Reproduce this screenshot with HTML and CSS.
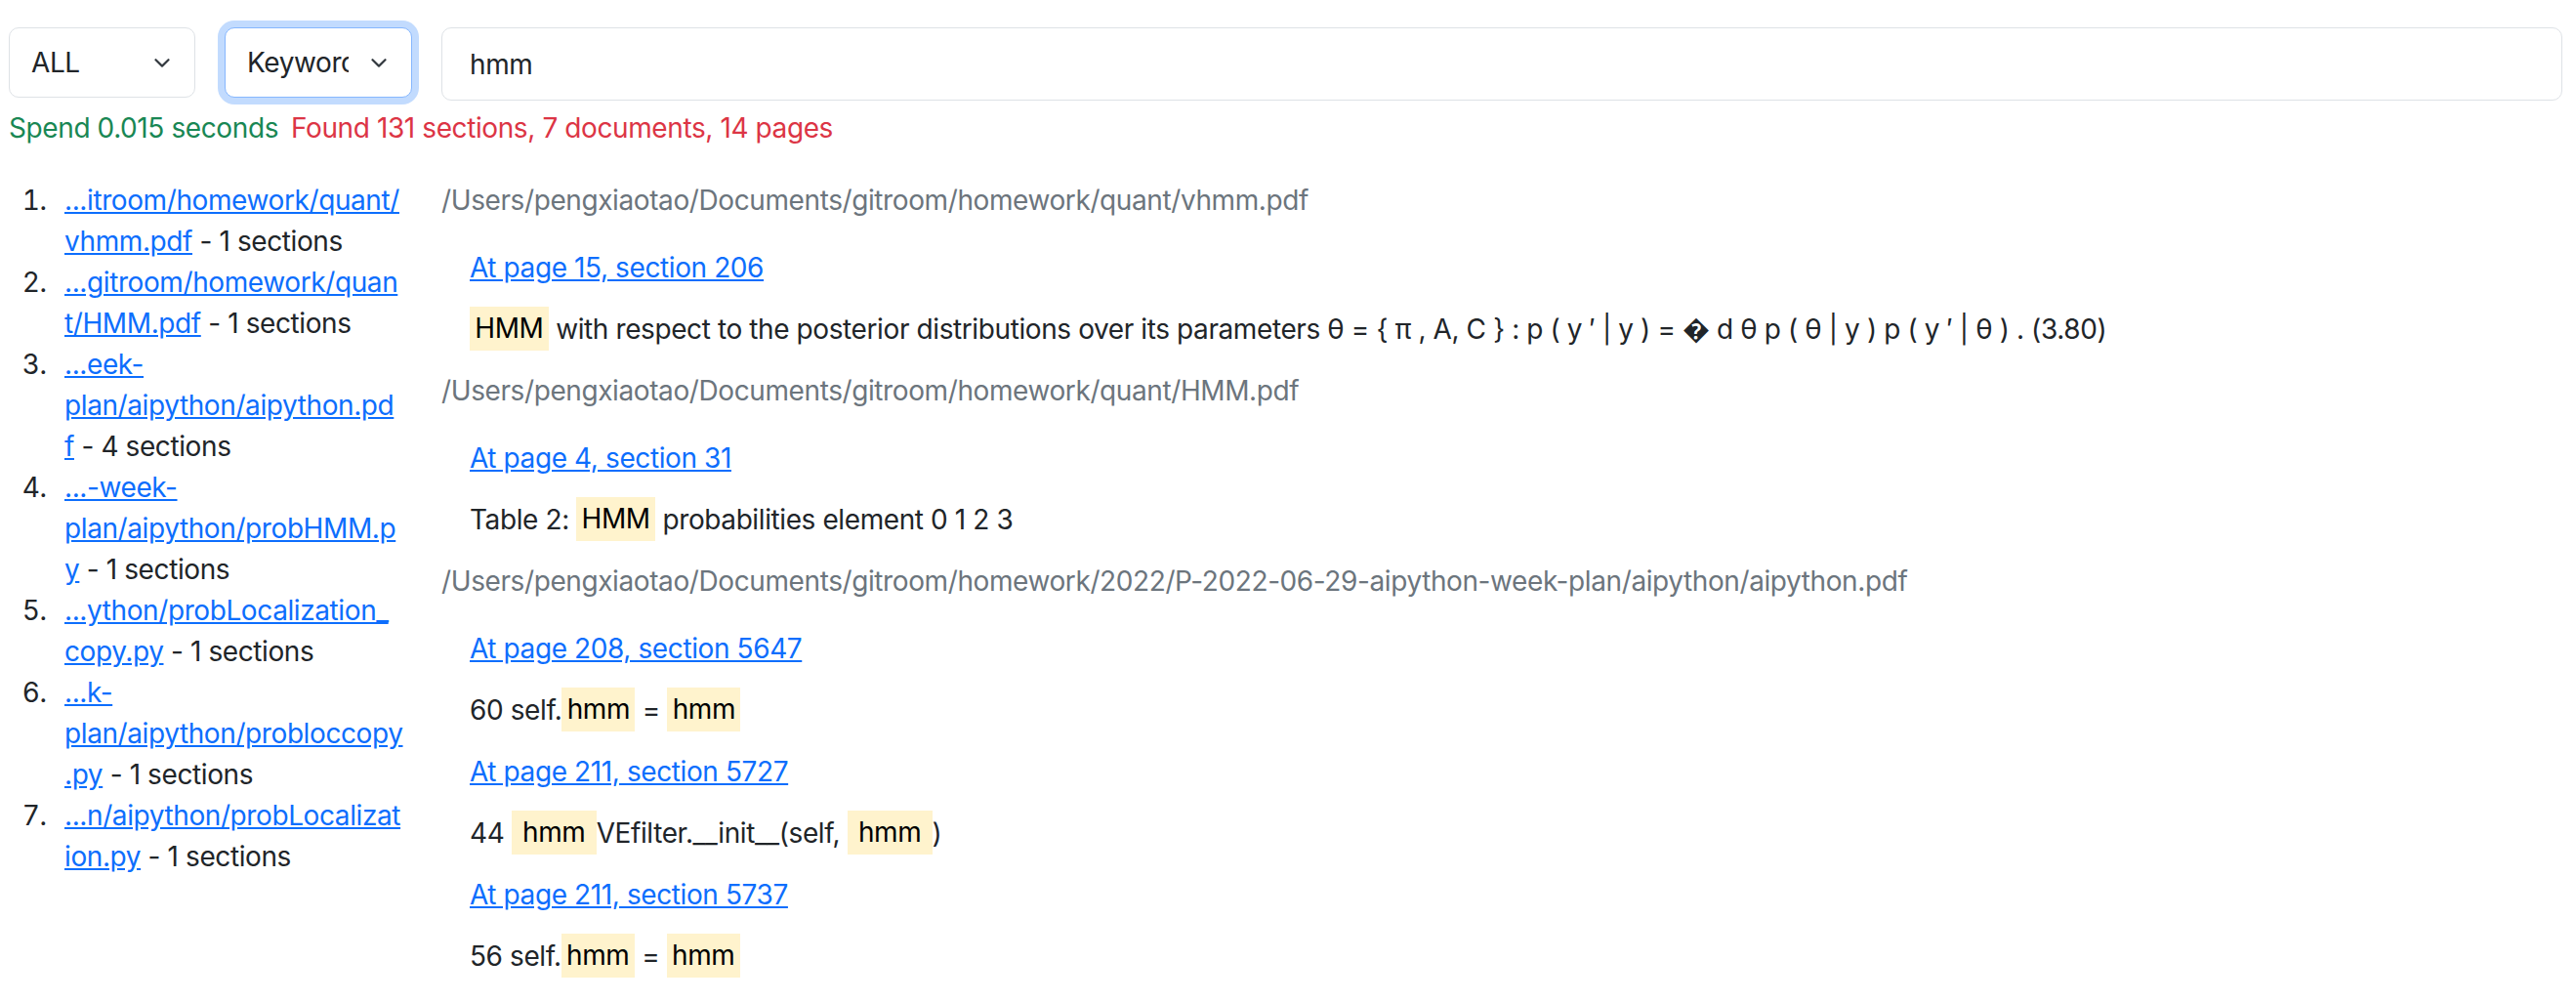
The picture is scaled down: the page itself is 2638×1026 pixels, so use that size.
FILE: index.html
```html
<!DOCTYPE html>
<html lang="en">
<head>
<meta charset="utf-8">
<title>Search</title>
<link rel="stylesheet" href="styles.css">
</head>
<body>
  <div class="controls">
    <div class="select">
      <span class="select-text">ALL</span>
      <svg class="chevron" viewBox="0 0 16 9" width="16" height="9"><path d="M1.5 1.2 8 7.6l6.5-6.4" fill="none" stroke="#343a40" stroke-width="2.2" stroke-linecap="round" stroke-linejoin="round"/></svg>
    </div>
    <div class="select focused">
      <span class="select-text clip">Keyword</span>
      <svg class="chevron" viewBox="0 0 16 9" width="16" height="9"><path d="M1.5 1.2 8 7.6l6.5-6.4" fill="none" stroke="#343a40" stroke-width="2.2" stroke-linecap="round" stroke-linejoin="round"/></svg>
    </div>
    <div class="search">hmm</div>
  </div>

  <div class="status">
    <span class="spend">Spend 0.015 seconds</span>
    <span class="found">Found 131 sections, 7 documents, 14 pages</span>
  </div>

  <div class="main">
    <ol class="doclist">
      <li><a href="#">...itroom/homework/quant/vhmm.pdf</a> - 1 sections</li>
      <li><a href="#">...gitroom/homework/quant/HMM.pdf</a> - 1 sections</li>
      <li><a href="#">...eek-plan/aipython/aipython.pdf</a> - 4 sections</li>
      <li><a href="#">...-week-plan/aipython/probHMM.py</a> - 1 sections</li>
      <li><a href="#">...ython/probLocalization_copy.py</a> - 1 sections</li>
      <li><a href="#">...k-plan/aipython/probloccopy.py</a> - 1 sections</li>
      <li><a href="#">...n/aipython/probLocalization.py</a> - 1 sections</li>
    </ol>

    <div class="results">
      <div class="doc">
        <div class="path">/Users/pengxiaotao/Documents/gitroom/homework/quant/vhmm.pdf</div>
        <div class="section">
          <div class="sec-link"><a href="#">At page 15, section 206</a></div>
          <div class="sec-text"><mark>HMM</mark> with respect to the posterior distributions over its parameters θ = { π , A, C } : p ( y ′ | y ) = &#xFFFD; d θ p ( θ | y ) p ( y ′ | θ ) . (3.80)</div>
        </div>
      </div>
      <div class="doc">
        <div class="path">/Users/pengxiaotao/Documents/gitroom/homework/quant/HMM.pdf</div>
        <div class="section">
          <div class="sec-link"><a href="#">At page 4, section 31</a></div>
          <div class="sec-text">Table 2: <mark>HMM</mark> probabilities element 0 1 2 3</div>
        </div>
      </div>
      <div class="doc">
        <div class="path">/Users/pengxiaotao/Documents/gitroom/homework/2022/P-2022-06-29-aipython-week-plan/aipython/aipython.pdf</div>
        <div class="section">
          <div class="sec-link"><a href="#">At page 208, section 5647</a></div>
          <div class="sec-text">60 self.<mark>hmm</mark> = <mark>hmm</mark></div>
        </div>
        <div class="section">
          <div class="sec-link"><a href="#">At page 211, section 5727</a></div>
          <div class="sec-text">44 <mark class="wide">hmm</mark>VEfilter.__init__(self, <mark class="wide">hmm</mark>)</div>
        </div>
        <div class="section">
          <div class="sec-link"><a href="#">At page 211, section 5737</a></div>
          <div class="sec-text">56 self.<mark>hmm</mark> = <mark>hmm</mark></div>
        </div>
      </div>
    </div>
  </div>
</body>
</html>
```

FILE: styles.css
```css
html, body {
  margin: 0;
  background: #fff;
}

body {
  padding: 28px 14px 0 9px;
  font-family: "Inter", "Noto Sans", "DejaVu Sans", sans-serif;
  font-size: 28px;
  line-height: 42px;
  letter-spacing: -0.4px;
  color: #212529;
}

.controls {
  display: flex;
  align-items: flex-start;
  gap: 30px;
}

.select {
  position: relative;
  box-sizing: border-box;
  width: 191px;
  height: 72px;
  border: 1.75px solid #dee2e6;
  border-radius: 10px;
  padding-left: 22px;
  display: flex;
  align-items: center;
  background: #fff;
}

.select.focused {
  width: 192px;
  border-color: #86b7fe;
  box-shadow: 0 0 0 7px rgba(13, 110, 253, 0.25);
}

.select-text {
  white-space: nowrap;
}

.select-text.clip {
  display: block;
  width: 104px;
  overflow: hidden;
}

.chevron {
  position: absolute;
  right: 25px;
  top: 31px;
}

.search {
  flex: 1;
  box-sizing: border-box;
  height: 75px;
  border: 1.75px solid #dee2e6;
  border-radius: 10px;
  padding-left: 28px;
  display: flex;
  align-items: center;
}

.status {
  margin-top: 7px;
  display: flex;
  gap: 13px;
}

.spend {
  color: #198754;
}

.found {
  color: #dc3545;
}

.main {
  margin-top: 32px;
  display: grid;
  grid-template-columns: 443px 1fr;
}

a {
  color: #0d6efd;
  text-decoration: underline;
}

.doclist {
  margin: 0;
  padding-left: 57px;
  width: 346.8px;
  overflow-wrap: anywhere;
}

.doclist li::marker {
  content: counter(list-item) ".\2002\2009";
}

.path {
  color: #6c757d;
  margin-bottom: 27px;
}

.section {
  padding-left: 29px;
}

.sec-link {
  margin-bottom: 20.5px;
}

.sec-text {
  margin-bottom: 21.5px;
}

mark {
  background: #fff3cd;
  color: #000;
  padding: 0.1875em;
}

mark.wide {
  padding: 0.1875em 0.4em;
}
```
